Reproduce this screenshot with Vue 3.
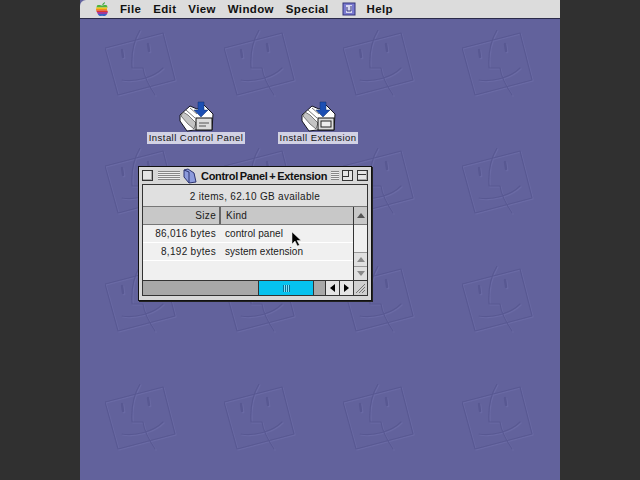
<script setup>
const menus = ['File', 'Edit', 'View', 'Window', 'Special']
const rows = [
  { size: '86,016 bytes', kind: 'control panel' },
  { size: '8,192 bytes', kind: 'system extension' },
]
const icons = [
  { name: 'Install Control Panel', cls: 'icon-a', panel: true },
  { name: 'Install Extension', cls: 'icon-b', panel: false },
]
</script>

<template>
  <div class="page">
    <div class="screen">
      <div class="menubar">
        <svg class="apple" width="16" height="16" viewBox="0 0 16 16">
          <path d="M8 4 C9 2 10 1.500 11 1 C11 2.500 10 4 8 4Z" fill="#3aa53a" />
          <path d="M3 4.500 C5 3.500 7 4.500 8 4.500 C9 4.500 11 3.500 13 4.500 L13.500 6.500 H2.500Z" fill="#4db33d" />
          <path d="M2.500 6.500 H13.500 L12.800 8 H2Z" fill="#f2c21a" />
          <path d="M2 8 H12.800 L13.200 9.500 H2.200Z" fill="#f08a1d" />
          <path d="M2.200 9.500 H13.200 L14 11 H2.800Z" fill="#e0352b" />
          <path d="M2.800 11 H14 L13 13 H3.800Z" fill="#a23a9a" />
          <path d="M3.800 13 H13 C12 15 10.500 15.500 8 14.800 C6 15.500 4.800 15 3.800 13Z" fill="#3763c4" />
        </svg>
        <span v-for="m in menus" :key="m" class="menu">{{ m }}</span>
        <svg class="help-app" width="14" height="14" viewBox="0 0 14 14">
          <rect x="1" y="1" width="12" height="12" fill="#7a7ad0" stroke="#34347a" />
          <rect x="4" y="3" width="6" height="8" fill="#d8d8f0" />
          <path d="M5 5 V9 H9 V4" fill="none" stroke="#34347a" />
        </svg>
        <span class="menu">Help</span>
      </div>

      <div class="desktop">
        <svg class="wallpaper" width="480" height="461" viewBox="0 0 480 461">
          <defs>
            <g id="face" fill="none" stroke-linecap="round" stroke-linejoin="round">
              <path d="M0 18 L58 3 L70 50 L13 65 Z" />
              <path d="M35 0 C29 10 26 24 27 38 L38 38 C39 46 44 56 50 65" />
              <path d="M17 50 C30 52 48 48 58 38" />
              <path d="M17 20 L18 27 M43 14 L44 21" stroke-width="2.500" />
            </g>
            <pattern id="tile" x="25" y="11" width="119" height="118" patternUnits="userSpaceOnUse">
              <use href="#face" transform="translate(1 1)" stroke="#6a6aa5" stroke-width="1.200" />
              <use href="#face" stroke="#585892" stroke-width="1.200" />
            </pattern>
          </defs>
          <rect width="480" height="461" fill="url(#tile)" />
        </svg>

        <div v-for="i in icons" :key="i.name" class="desk-icon" :class="i.cls">
          <svg width="36" height="32" viewBox="0 0 36 32">
            <path d="M2 14 L12 5 L19 8 L26 4 L35 13 L34 29 L17 29 L9 30 L2 20Z" fill="#fff" stroke="#14141f" />
            <path d="M3 15 L10 23 L16 28 L18 22 L10 14 L5 11Z" fill="#c4c4c4" stroke="#333" stroke-width=".6" />
            <path d="M8 9 L17 17 M12 7 L19 13" stroke="#777" />
            <path d="M20 1 H26 V9 H30 L23 16 L16 9 H20Z" fill="#1c4fb4" stroke="#12306e" stroke-width=".5" />
            <rect x="18" y="17" width="16" height="12" fill="#ddd" stroke="#111" />
            <path v-if="i.panel" d="M21 22 H31 M21 25 H28" stroke="#555" />
            <rect v-else x="21" y="20" width="10" height="6" fill="#eee" stroke="#222" />
          </svg>
          <div class="label">{{ i.name }}</div>
        </div>

        <div class="window">
          <div class="titlebar">
            <div class="box"></div>
            <div class="stripes short"></div>
            <svg class="folder" width="16" height="16" viewBox="0 0 16 16">
              <path d="M2 2 L6 1 L12 5 L14 14 L7 15 L2 9Z" fill="#8d9bdc" stroke="#2d3570" />
              <path d="M2 2 L7 4 L7 15" fill="none" stroke="#2d3570" />
            </svg>
            <div class="title">Control Panel + Extension</div>
            <div class="stripes tiny"></div>
            <div class="box zoom"></div>
            <div class="box shade"></div>
          </div>
          <div class="inner">
            <div class="info">2 items, 62.10 GB available</div>
            <div class="list">
              <div class="main">
                <div class="columns">
                  <div class="col-size">Size</div>
                  <div class="col-kind">Kind</div>
                </div>
                <div v-for="r in rows" :key="r.size" class="row">
                  <div class="cell-size">{{ r.size }}</div>
                  <div class="cell-kind">{{ r.kind }}</div>
                </div>
              </div>
              <div class="vscroll">
                <div class="arrow-top"><span class="tri up dark"></span></div>
                <div class="vtrack"></div>
                <div class="arrow"><span class="tri up"></span></div>
                <div class="arrow"><span class="tri down"></span></div>
              </div>
            </div>
            <div class="hscroll">
              <div class="htrack">
                <div class="thumb"><span class="grip"></span></div>
              </div>
              <div class="harrow"><span class="tri left"></span></div>
              <div class="harrow"><span class="tri right"></span></div>
              <div class="grow">
                <svg width="13" height="14" viewBox="0 0 13 14">
                  <path d="M2 12 L11 3 M5 12 L11 6 M8 12 L11 9" stroke="#777" />
                </svg>
              </div>
            </div>
          </div>
        </div>

        <svg class="cursor" width="12" height="16" viewBox="0 0 12 16">
          <path d="M1 1 V13 L4 10 L6.500 15 L8.500 14 L6 9.500 H10Z" fill="#000" stroke="#eee" stroke-width=".5" />
        </svg>
      </div>
    </div>
  </div>
</template>

<style>
html, body {
  margin: 0;
  background: #303030;
}
</style>

<style scoped>
.page {
  width: 640px;
  height: 480px;
  background: #303030;
  display: flex;
  justify-content: center;
  overflow: hidden;
}
.screen {
  width: 480px;
  height: 480px;
  display: flex;
  flex-direction: column;
  background: #62629c;
}
.menubar {
  height: 18px;
  flex: none;
  display: flex;
  align-items: center;
  background: #dcdcdc;
  border-bottom: 1px solid #2a2a4a;
  box-shadow: 0 0 0 0 #000;
  border-radius: 6px 0 0 0;
  padding-left: 14px;
  font: bold 11.500px "Liberation Sans", sans-serif;
  letter-spacing: 0.35px;
  color: #111;
}
.apple {
  margin-right: 10px;
}
.menu {
  margin-right: 12px;
}
.help-app {
  margin: 0 11px 0 1px;
}
.desktop {
  position: relative;
  flex: 1;
  overflow: hidden;
}
.wallpaper {
  position: absolute;
  left: 0;
  top: 0;
}
.desk-icon {
  position: absolute;
  top: 82px;
  display: flex;
  flex-direction: column;
  align-items: center;
  color: #111;
}
.icon-a {
  left: 66px;
  width: 100px;
}
.icon-b {
  left: 198px;
  width: 80px;
}
.label {
  margin-top: -1px;
  height: 12px;
  padding: 0 2px;
  background: #d2d2e4;
  font: 9.500px/12px "Liberation Sans", sans-serif;
  letter-spacing: 0.45px;
  white-space: nowrap;
}
.window {
  position: absolute;
  left: 58px;
  top: 147px;
  width: 232px;
  height: 133px;
  display: flex;
  flex-direction: column;
  background: #d8d8d8;
  border: 1px solid #111;
  box-shadow: 1px 1px 0 #222;
  font: 10px "Liberation Sans", sans-serif;
  letter-spacing: 0.3px;
  color: #1a1a1a;
}
.titlebar {
  height: 17px;
  flex: none;
  display: flex;
  align-items: center;
  padding: 0 3px;
  gap: 3px;
}
.box {
  width: 9px;
  height: 9px;
  border: 1px solid #333;
  background: #e4e4e4;
  box-shadow: inset -1px -1px 0 #aaa;
  flex: none;
}
.stripes {
  height: 9px;
  flex: none;
  background: repeating-linear-gradient(#888 0 1px, #eee 1px 2px);
}
.short {
  width: 22px;
  margin-left: 2px;
}
.tiny {
  width: 8px;
  margin-right: 0;
}
.folder {
  flex: none;
  margin-left: -1px;
}
.title {
  flex: 1;
  min-width: 0;
  font: bold 11px "Liberation Sans", sans-serif;
  letter-spacing: -0.3px;
  word-spacing: -1px;
  white-space: nowrap;
  color: #111;
}
.zoom {
  background: #e4e4e4;
  box-shadow: inset -3px -3px 0 #e4e4e4, inset -4px -4px 0 #333;
}
.shade {
  margin-left: 1px;
  background: linear-gradient(#e4e4e4 3px, #333 3px 4px, #e4e4e4 4px);
}
.inner {
  margin: 0 3px 4px;
  flex: 1;
  display: flex;
  flex-direction: column;
  min-height: 0;
  border: 1px solid #333;
}
.info {
  height: 22px;
  flex: none;
  line-height: 23px;
  text-align: center;
  background: #e0e0e0;
  border-bottom: 1px solid #777;
  box-sizing: border-box;
}
.list {
  flex: 1;
  display: flex;
  min-height: 0;
}
.main {
  flex: 1;
  background: #f0f0f0;
}
.columns {
  height: 18px;
  display: flex;
  background: #c8c8c8;
  border-bottom: 1px solid #777;
  box-sizing: border-box;
  line-height: 17px;
}
.col-size {
  width: 78px;
  text-align: right;
  padding-right: 3px;
  box-sizing: border-box;
  border-right: 2px solid #666;
}
.col-kind {
  padding-left: 5px;
}
.row {
  height: 18px;
  display: flex;
  line-height: 17px;
  border-bottom: 1px solid #fff;
  box-sizing: border-box;
}
.cell-size {
  width: 73px;
  text-align: right;
}
.cell-kind {
  padding-left: 9px;
  letter-spacing: 0.05px;
}
.vscroll {
  width: 13px;
  flex: none;
  display: flex;
  flex-direction: column;
  border-left: 1px solid #333;
  background: #f0f0f0;
}
.arrow-top {
  height: 18px;
  flex: none;
  background: #c8c8c8;
  border-bottom: 1px solid #777;
  box-sizing: border-box;
  display: flex;
  align-items: center;
  justify-content: center;
}
.vtrack {
  flex: 1;
}
.arrow {
  height: 14px;
  flex: none;
  display: flex;
  align-items: center;
  justify-content: center;
  background: #e0e0e0;
  border-top: 1px solid #999;
  box-sizing: border-box;
}
.tri {
  width: 0;
  height: 0;
  display: block;
  border-style: solid;
  border-color: transparent;
}
.up {
  border-width: 0 4px 5px;
  border-bottom-color: #8a8a8a;
}
.up.dark {
  border-bottom-color: #555;
}
.down {
  border-width: 5px 4px 0;
  border-top-color: #8a8a8a;
}
.left {
  border-width: 4px 5px 4px 0;
  border-right-color: #000;
}
.right {
  border-width: 4px 0 4px 5px;
  border-left-color: #000;
}
.hscroll {
  height: 14px;
  flex: none;
  display: flex;
  border-top: 1px solid #333;
}
.htrack {
  flex: 1;
  display: flex;
  background: #a8a8a8;
  padding-left: 115px;
}
.thumb {
  width: 56px;
  background: #06c2ef;
  border: solid #333;
  border-width: 0 1px;
  box-sizing: border-box;
  display: flex;
  align-items: center;
  justify-content: center;
}
.grip {
  width: 7px;
  height: 7px;
  background: repeating-linear-gradient(90deg, #0b6f95 0 1px, #7fe2fa 1px 2px);
}
.harrow {
  width: 14px;
  flex: none;
  display: flex;
  align-items: center;
  justify-content: center;
  background: #e4e4e4;
  border-left: 1px solid #333;
  box-sizing: border-box;
}
.grow {
  width: 13px;
  flex: none;
  border-left: 1px solid #333;
  background: #d0d0d0;
}
.grow svg {
  display: block;
}
.cursor {
  position: absolute;
  left: 211px;
  top: 212px;
}
</style>
